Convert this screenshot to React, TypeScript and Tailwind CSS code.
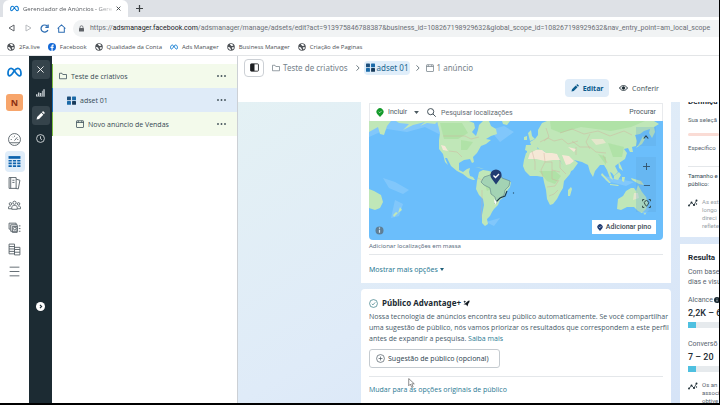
import type { ReactNode } from "react";

type P = { className?: string };

const Meta = ({ className }: P) => (
  <svg viewBox="0 0 24 16" className={className} fill="none" stroke="#0a78d1" strokeWidth="2.8" strokeLinecap="round">
    <path d="M12 6.500C9.800 3.200 8.400 2 6.600 2 3.800 2 1.600 6 1.600 10c0 2.500 1 4 2.700 4 2.200 0 3.600-2 7.700-8.500C13.800 2.900 15.500 2 17.200 2c2.900 0 5.200 4 5.200 8.200 0 2.400-1 3.800-2.800 3.800-2 0-3.400-1.500-7.600-7.500" />
  </svg>
);

const Globe = () => (
  <svg viewBox="0 0 16 16" className="size-2 shrink-0">
    <circle cx="8" cy="8" r="7.500" fill="#4d5156" />
    <path d="M2 8c2 0 4 .5 4.500 2S8 12 8 13.800C5 13.800 2.200 11.500 2 8zM6 2.500C8 1.800 11 2 13 5c-1.500 0-2 1.500-3.500 1.200C8 6 9 4.500 6.500 4.500zM9.500 9c1.500-1 3.500-.5 4.500 0-.5 2-1.500 3-3 4 0-1.500-1.500-2.500-1.500-4z" fill="#fff" />
  </svg>
);

const Folder = ({ className }: P) => (
  <svg viewBox="0 0 16 16" className={className} fill="none" stroke="currentColor" strokeWidth="1.500" strokeLinejoin="round">
    <path d="M1 13.500V2.500h5l1.500 2.500H15v8.500z" />
  </svg>
);

const Grid = ({ className }: P) => (
  <svg viewBox="0 0 16 16" className={className}>
    <rect x="0" y="1" width="7" height="6.500" rx="1" fill="#1d4f7c" />
    <rect x="9" y="1" width="7" height="6.500" rx="1" fill="#1a6aa8" />
    <rect x="0" y="9" width="7" height="6.500" rx="1" fill="#1a6aa8" />
    <rect x="9" y="9" width="7" height="6.500" rx="1" fill="#173a5a" />
  </svg>
);

const AdBox = ({ className }: P) => (
  <svg viewBox="0 0 16 16" className={className} fill="none" stroke="currentColor" strokeWidth="1.500">
    <rect x="1" y="1.500" width="14" height="13.500" rx="1" />
    <path d="M1 5h14M4.500 1.500V5M11.500 1.500V5" />
  </svg>
);

const Pencil = ({ className }: P) => (
  <svg viewBox="0 0 16 16" className={className} fill="currentColor">
    <path d="M1 15l1-4.500L9.500 3 13 6.500 5.500 14zM10.500 2l1.200-1.200c.5-.5 1.200-.5 1.700 0l1.800 1.800c.5.5.5 1.200 0 1.700L14 5.500z" />
  </svg>
);

const Estimate = () => (
  <svg viewBox="0 0 20 16" className="mt-px h-2 w-[10px] shrink-0" fill="none" stroke="#1c2b33" strokeWidth="1.500">
    <path d="M2 13l5-6 5 5 5-9" />
    <g fill="#1c2b33" stroke="none">
      <circle cx="2" cy="13" r="1.800" /><circle cx="7" cy="7" r="2" /><circle cx="12" cy="12" r="2.200" /><circle cx="17" cy="3" r="2" /><circle cx="17" cy="10" r="1.300" />
    </g>
  </svg>
);

const Bookmark = ({ icon, children }: { icon?: ReactNode; children: string }) => (
  <a href="#" className="flex items-center gap-1 whitespace-nowrap">
    {icon ?? <Globe />}
    {children}
  </a>
);

const Browser = () => (
  <header className="shrink-0 font-['Open_Sans','Noto_Sans',sans-serif] text-[#5f6368]">
    <div className="flex h-[17px] items-end bg-[#dee1e6] pl-[3px]">
      <div className="flex h-[17px] w-[125px] items-center rounded-t-md bg-white px-[7px]">
        <Meta className="mr-1 h-[7px] w-[9px] shrink-0" />
        <span className="bg-gradient-to-r from-[#4b4f54] from-80% to-[#4b4f54]/20 bg-clip-text text-[6px] whitespace-nowrap text-transparent">
          Gerenciador de Anúncios - Gere
        </span>
        <button aria-label="Fechar guia" className="ml-auto">
          <svg viewBox="0 0 8 8" className="size-[5px]" stroke="#3c4043" strokeWidth="1.400"><path d="M1 1l6 6M7 1L1 7" /></svg>
        </button>
      </div>
      <button aria-label="Nova guia" className="ml-2 flex h-[17px] items-center">
        <svg viewBox="0 0 8 8" className="size-[7px]" stroke="#3c4043" strokeWidth="1.400"><path d="M4 0v8M0 4h8" /></svg>
      </button>
    </div>
    <div className="flex h-[22px] items-center bg-white">
      <div className="flex w-[73px] shrink-0 items-center gap-2 pl-2">
        <button aria-label="Voltar"><svg viewBox="0 0 16 16" className="size-2" fill="none" stroke="#5f6368" strokeWidth="2"><path d="M12 2v12L2 8z" /></svg></button>
        <button aria-label="Avançar"><svg viewBox="0 0 16 16" className="size-2" fill="none" stroke="#b8bbbf" strokeWidth="2"><path d="M4 2v12l10-6z" /></svg></button>
        <button aria-label="Recarregar"><svg viewBox="0 0 16 16" className="size-[9px]" fill="none" stroke="#2d6db3" strokeWidth="2.200"><path d="M14 10.500A6.300 6.300 0 1 1 13 4M14.500 1v5h-5" /></svg></button>
        <button aria-label="Início"><svg viewBox="0 0 16 16" className="size-[9px]" fill="none" stroke="#2d6db3" strokeWidth="1.800"><path d="M1 8l7-6.500L15 8M3 7v7.500h10V7" /></svg></button>
      </div>
      <div className="flex h-[17px] min-w-0 flex-1 items-center gap-[6px] overflow-hidden rounded-l-full bg-[#f1f3f4] pl-[6px]">
        <svg viewBox="0 0 10 12" className="h-[7px] w-[5px] shrink-0" fill="#5f6368"><rect y="5" width="10" height="7" rx="1" /><path d="M2 5V3.500a3 3 0 0 1 6 0V5" fill="none" stroke="#5f6368" strokeWidth="1.600" /></svg>
        <span className="font-['Roboto',sans-serif] text-[7px] whitespace-nowrap text-[#6b6f74]">
          https://<span className="text-[#202124]">adsmanager.facebook.com</span>/adsmanager/manage/adsets/edit?act=913975846788387&amp;business_id=108267198929632&amp;global_scope_id=108267198929632&amp;nav_entry_point=am_local_scope
        </span>
      </div>
    </div>
    <nav className="flex h-4 items-center gap-2 bg-white pl-[7px] text-[6px] text-[#4b4f54]">
      <Bookmark>2Fa.live</Bookmark>
      <Bookmark icon={<svg viewBox="0 0 16 16" className="size-2"><circle cx="8" cy="8" r="8" fill="#1469d6" /><path d="M7 16V10H5V7.500h2V6c0-2 1-3 3-3h1.500v2.300H10.300c-.8 0-1 .3-1 1v1.200h2.200L11 10H9.300v6z" fill="#fff" /></svg>}>Facebook</Bookmark>
      <Bookmark>Qualidade da Conta</Bookmark>
      <Bookmark icon={<Meta className="h-[6px] w-2" />}>Ads Manager</Bookmark>
      <Bookmark>Business Manager</Bookmark>
      <Bookmark>Criação de Paginas</Bookmark>
    </nav>
    <div className="h-px bg-[#e3e5e7]" />
  </header>
);

const RailButton = ({ label, active, children }: { label: string; active?: boolean; children: ReactNode }) => (
  <button aria-label={label} className={`flex h-[21px] w-5 items-center justify-center rounded-sm ${active ? "bg-[#e0edf9]" : ""}`}>
    <svg viewBox="0 0 24 24" className="size-[13px]" fill="none" stroke="#59636a" strokeWidth="1.700">{children}</svg>
  </button>
);

const Rail = () => (
  <nav className="flex w-[29px] shrink-0 flex-col items-center bg-white pt-[11px]">
    <Meta className="h-[10px] w-[15px]" />
    <div className="mt-[17px] mb-[18px] flex size-[17px] items-center justify-center rounded-[3px] bg-[#f7a56b] text-[9px] font-bold text-[#8c2f12]">N</div>
    <div className="flex flex-col items-center gap-px">
      <RailButton label="Visão geral">
        <circle cx="12" cy="12" r="11" /><path d="M3 18h18M12 14l5-6M5 12h2M8 7l1 1M12 5v2M19 12h-2" />
      </RailButton>
      <RailButton label="Campanhas" active>
        <g stroke="none" fill="#0d63ad"><path d="M1 2h22v5H1z" /><path d="M1 9h6v3H1zM9 9h6v3H9zM17 9h6v3h-6zM1 14h6v3H1zM9 14h6v3H9zM17 14h6v3h-6zM1 19h6v3H1zM9 19h6v3H9zM17 19h6v3h-6z" /></g>
      </RailButton>
      <RailButton label="Relatórios">
        <path d="M2 1h13v20H2zM5 1v20M8 6h4M8 10h4M15 4l7 2-3 16-5-1" />
      </RailButton>
      <RailButton label="Públicos">
        <circle cx="12" cy="7" r="3" /><circle cx="4.500" cy="9" r="2.300" /><circle cx="19.500" cy="9" r="2.300" /><path d="M7 19v-4c0-2 2-3 5-3s5 1 5 3v4zM7 18H1v-3c0-1 1-2 4-2M17 18h6v-3c0-1-1-2-4-2" />
      </RailButton>
      <RailButton label="Configurações de anúncios">
        <path d="M4 15H2V4h13v3M5 7h12v12H5zM8 10h9v11H8z" /><circle cx="12.500" cy="14" r="2.500" /><path d="M20 9h3M20 14h3M20 19h3" />
      </RailButton>
      <RailButton label="Cobrança">
        <path d="M2 2h10v18H2zM12 8h10v14H12zM2 6.500h10M2 11h10M2 15.500h10M12 12h10M12 17h10" />
      </RailButton>
      <RailButton label="Todas as ferramentas">
        <path d="M3 4h18M3 12h18M3 20h18" />
      </RailButton>
    </div>
  </nav>
);

const DarkRail = () => (
  <nav className="flex w-[23px] shrink-0 flex-col items-center bg-[#1c2b33] pt-1">
    <button aria-label="Fechar" className="flex h-[19px] w-[18px] items-center justify-center rounded-[3px] bg-[#35434b]">
      <svg viewBox="0 0 8 8" className="size-[7px]" stroke="#fff"><path d="M.5.5l7 7M7.500.5l-7 7" /></svg>
    </button>
    <button aria-label="Gráficos" className="flex h-[27px] items-center justify-center">
      <svg viewBox="0 0 16 16" className="size-[9px]" fill="#c9d0d4"><path d="M0 11h2.500v3H0zM3.500 8H6v6H3.500zM7 9h2.500v5H7zM10.500 5H12v9h-1.500zM13 2h2.500v12H13zM0 15h16v1H0z" /></svg>
    </button>
    <button aria-label="Editar" className="flex h-[19px] w-[18px] items-center justify-center rounded-[3px] bg-[#35434b]">
      <Pencil className="size-[9px] text-white" />
    </button>
    <button aria-label="Histórico" className="flex h-[27px] items-center justify-center">
      <svg viewBox="0 0 16 16" className="size-[9px]" fill="none" stroke="#d5dadd" strokeWidth="1.600"><circle cx="8" cy="8" r="7" /><path d="M8 4v4.500l2.500 1.500" /></svg>
    </button>
    <button aria-label="Expandir" className="mt-auto mb-[92px]">
      <svg viewBox="0 0 16 16" className="size-[9px]"><circle cx="8" cy="8" r="8" fill="#fff" /><path d="M7 5l3 3-3 3" fill="none" stroke="#1c2b33" strokeWidth="2" /></svg>
    </button>
  </nav>
);

const TreeRow = ({ icon, label, className }: { icon: ReactNode; label: string; className: string }) => (
  <li className={`flex h-6 items-center border-l pr-[11px] text-[7px] text-[#344854] ${className}`}>
    {icon}
    <span className="ml-1 flex-1">{label}</span>
    <button aria-label={`Mais opções de ${label}`}>
      <svg viewBox="0 0 18 4" className="h-[2px] w-[9px]" fill="#46545c"><circle cx="2" cy="2" r="1.900" /><circle cx="9" cy="2" r="1.900" /><circle cx="16" cy="2" r="1.900" /></svg>
    </button>
  </li>
);

const Tree = () => (
  <aside className="w-[186px] shrink-0 border-r border-[#ccd0d5] bg-white pt-2 font-['Open_Sans','Noto_Sans',sans-serif]">
    <ul>
      <TreeRow icon={<Folder className="size-2" />} label="Teste de criativos" className="border-[#7cc043] bg-[#f3faeb] pl-[6px]" />
      <TreeRow icon={<Grid className="size-[9px]" />} label="adset 01" className="border-[#1c6fb5] bg-[#dfebf8] pl-[14px]" />
      <TreeRow icon={<AdBox className="size-2" />} label="Novo anúncio de Vendas" className="border-[#7cc043] bg-[#f3faeb] pl-[23px]" />
    </ul>
  </aside>
);

const Chevron = () => (
  <svg viewBox="0 0 5 8" className="mr-1 ml-[6px] h-[6px] w-1" fill="none" stroke="#6b7880" strokeWidth="1.300"><path d="M.5 .5l3.500 3.500-3.500 3.500" /></svg>
);

const TopBar = () => (
  <div className="h-[46px] shrink-0 bg-white">
    <div className="flex h-[23px] items-center pl-[6px] text-[8px] text-[#75828a]">
      <button aria-label="Alternar painel" className="mr-[6px] flex h-[18px] w-5 items-center justify-center rounded-sm border border-[#ccd0d5]">
        <svg viewBox="0 0 16 16" className="size-[9px]"><rect x="1" y="1.500" width="14" height="13" rx="1.500" fill="none" stroke="#1c1e21" strokeWidth="1.500" /><path d="M1 1.500h7v13H1z" fill="#1c1e21" /></svg>
      </button>
      <a href="#" className="flex items-center gap-[3px] px-[2px]"><Folder className="size-2" />Teste de criativos</a>
      <Chevron />
      <a href="#" className="flex h-[14px] items-center gap-[2px] rounded-sm bg-[#e0eefa] px-[2px] text-[#1b6690]"><Grid className="size-[9px]" />adset 01</a>
      <Chevron />
      <a href="#" className="flex items-center gap-[2px] px-[2px]"><AdBox className="size-2" />1 anúncio</a>
    </div>
    <div className="flex h-[18px] justify-end pr-[60px] text-[7px]">
      <button className="mr-[10px] flex h-[18px] w-11 items-center justify-center gap-1 rounded-sm bg-[#dfecf8] font-bold text-[#0a5a8c]">
        <Pencil className="size-2" />Editar
      </button>
      <button className="flex h-[18px] items-center gap-1 text-[#4b5960]">
        <svg viewBox="0 0 18 12" className="h-[6px] w-[9px]" fill="none" stroke="#1c2b33" strokeWidth="1.800"><path d="M1 6c4-6.500 12-6.500 16 0-4 6.500-12 6.500-16 0z" /><circle cx="9" cy="6" r="2.600" fill="#1c2b33" /></svg>
        Conferir
      </button>
    </div>
  </div>
);

const WorldMap = () => (
  <svg viewBox="369 121 294 119" preserveAspectRatio="xMidYMid slice" className="h-[119px] w-full">
    <rect x="369" y="121" width="294" height="119" fill="#6bbefb" />
    <g fill="#94d0fb" opacity=".55">
      <path d="M369 121h68l4 14-16-8-18 5-20-3-18 8z" />
      <path d="M383 178l12 4 14 8-6 4-14-6zM395 200l8 4-4 12-8 2zM486 222l14-4-6 8zM604 176l30 6-8 4-20-5zM640 205l10 4-6 6zM490 130l14-4 10 6-14 10z" />
    </g>
    <g fill="#c0e7b8">
      <path d="M369 121h22l-4 5-3 9-4-1-2-7-9 5zM396 121h42l-3 3-8-1-7 3 5-4-12 3-10 5 6-6-10-1z" />
      <path d="M437 121h32l5 2 1 5-3 4 4 4 2-6 1-5 4-4h6l2 5 5 3 1 5-6 2-5 3 5 1-5 4-5 2-4 7-4 4 1 5-2 1-2-4-6 1-5 3 0 7 4 2 4-3 3-1-1 4 1 4 3 1 2 3-2 0-5-2-5-4-6-3-6-5-4-8-2 0 3 7-3-3-2-8-4-5 0-9 1-7z" />
      <path d="M479 172l4-2 6 1 6 2 4 4 6 3 6 2-1 5-4 5-2 5-4 3-2 5-4 4-2 3-2 4-3 3 1 5-3 2-3-3 0-8 2-10-1-6-4-4-3-6 1-8z" />
      <path d="M369 189l5 2 7 4 2 7-3 6-5 2-6-2zM400 207l2 3-4 3zM396 212l2 1-4 4-1-2z" />
      <path d="M502 121h8l-3 4-4-1zM528 133l3-3 1 6 3 3-5 2zM524 137l3-1 0 4-3 0z" />
      <path d="M527 151l-2-1 1-5 5 0-1-3 5-3 3-4 0-5 4-7 5-2h107l5 3-5 3 1 5-3 6-3-5 1-4-6 2-4 3-5 1 2 6-1 5-4 1 1 5-3 0-2-4-4 1 3 4-2 6-6 4-4 3 3 6-4 4-2-3-2-1 3 8-3-2-3-8-3-5-4 0-5 6-2 6-3-5-2-7-6-3-8-2 4 3-5 7-6 3-4-7-4-7-1-3-8-2-1-2-3 2-2-3-4-1-3-3 3 8-4-2-4-2-5 3z" />
      <path d="M526 153l8-4 7 0 4 3 6 0 6 1 3 8 5 7 7 0-2 6-6 7-1 7-3 5-3 6-4 5-3 1-3-6-1-9-2-8-1-5-6-1-7 0-5-5-2-5 1-6zM571 187l1 2-2 7-2 0 0-6z" />
      <path d="M618 199l5-3 3-5 5-3 3 0 2 3 2-6 4 7 4 5 2 7-2 5-4 4-4-2-4-4-7 0-6 3-4-1zM644 213l2 0-1 2z" />
      <path d="M602 173l9 10-2 0-8-8zM614 176l5-4 2 3-3 5-4-1zM610 184l9 1-1 1-8-1zM622 177l3 0-1 5-2-1zM631 178l10 3 3 4-5-1-7-4zM618 160l3 6 2 5-4-3zM643 136l2 3-3 5-6 4 3-4z" />
      <path d="M475 167l6 1 3 1-5-1z" />
    </g>
    <g fill="#fbe8d9">
      <path d="M530 153l6-3 6 0 4 3 6 0 5 1 3 6-7 0-8 1-9-2-8 0zM562 155l7 1 5 5-4 3-4 1zM568 147l8 2-2 3zM441 145l4 1 3 5-5-1z" opacity=".9" />
      <path d="M591 139l12 0 3 4-10 2zM634 193l4 0 1 5-6 2z" opacity=".6" />
    </g>
    <g fill="#a9dfa0" opacity=".7">
      <path d="M440 123l22 0 6 10-10 6-14 0zM550 121h95l-14 6-20 4-30-4-20 6-10-4zM539 171l16 0 6 5-6 8-8-3zM461 140l12 2-6 8-6 0zM483 178l12 1 0 8-8 4zM608 143l16 4-2 10-9 0zM598 154l8 3 0 8z" />
    </g>
    <g fill="none" stroke="#d3a99a" strokeWidth=".4">
      <path d="M443 136h22l6 3 8-2M449 151l8 1 5 5M540 142l8-4 6 3 8-2 6 5 10-3M546 128l3 9-5 4M560 133l12-4 12 5 14-3 12 5 14-5 8 4M572 141l8 6 10 0 6 5 10 1M576 147l0 8M590 134l-4 8 4 7M544 153l1 9 7 0 0 8 8 2M532 151l3 11 0 8M545 162l-4 8 2 7M552 170l0 9 6 2M547 187l8-1 4-6M549 196l5-2 4-4M560 160l0 8 6 6M482 190l0 14-1 14M478 178l4 2 5-3M603 155l4 8M641 181l0 4" />
    </g>
    <path d="M484 177l6-2 2-2 5 3 3-2 2 4 8 3-1 5-4 4-1 5-5 4-3 2-1-4-4-3-1-6-6-3-3-3z" fill="#a3d3b4" stroke="#5d8288" strokeWidth=".6" />
    <path d="M507 191l-2 5-5 2-3 3-2 3" fill="none" stroke="#1d3a4c" strokeWidth="1.100" />
    <path d="M494 199l3 3-2 3z" fill="#fff" />
    <circle cx="513.500" cy="193" r=".7" fill="#2c5574" />
    <path d="M496 184.500l-4-5.500a5.600 5.600 0 1 1 8 0z" fill="#213c72" />
    <path d="M493.500 175.500l2 2 3.500-3.500" fill="none" stroke="#fff" strokeWidth="1.400" />
    <circle cx="379.500" cy="230.500" r="4" fill="#5f7f96" />
    <path d="M379.500 229.800v3M379.500 227.500v1.300" stroke="#cfe4f2" strokeWidth="1.200" />
  </svg>
);

const mapBtn = "flex w-5 items-center justify-center bg-[#5aa3d6]/25";

const LocationCard = () => (
  <section className="h-[181px] bg-white px-2 pt-px">
    <div className="flex h-[18px] items-center border-x border-t border-[#e8eaed] pr-[6px] pl-[6px] font-['Roboto',sans-serif] text-[7px] text-[#4b5960]">
      <svg viewBox="0 0 14 16" className="h-[9px] w-2" ><path d="M7 16L2 10.500A6.300 6.300 0 1 1 12 10.500z" fill="#149a2b" /><path d="M4.500 6.500l2 2 3.500-3.500" stroke="#fff" fill="none" /></svg>
      <button className="ml-1 flex items-center gap-[7px]">
        Incluir
        <svg viewBox="0 0 8 5" className="h-[3px] w-[5px]" fill="#4b5960"><path d="M0 0h8L4 5z" /></svg>
      </button>
      <svg viewBox="0 0 16 16" className="mr-[5px] ml-2 size-[9px] shrink-0" fill="none" stroke="#33424b" strokeWidth="1.600"><circle cx="6.500" cy="6.500" r="5.500" /><path d="M10.500 10.500l5 5" /></svg>
      <input aria-label="Pesquisar localizações" placeholder="Pesquisar localizações" className="min-w-0 flex-1 bg-transparent placeholder:text-[#5f6b72]" />
      <button>Procurar</button>
    </div>
    <div className="relative h-[119px] overflow-hidden rounded-b-sm">
      <WorldMap />
      <div className="absolute top-[6px] right-[7px] flex flex-col">
        <button aria-label="Recolher" className={`${mapBtn} mb-[11px] h-[19px]`}><svg viewBox="0 0 8 5" className="h-1 w-[6px]" fill="none" stroke="#2b4354" strokeWidth="1.500"><path d="M1 4.500l3-3.500 3 3.500" /></svg></button>
        <button aria-label="Aumentar zoom" className={`${mapBtn} h-[19px]`}><svg viewBox="0 0 8 8" className="size-[7px]" stroke="#33566f" strokeWidth="1.100"><path d="M4 0v8M0 4h8" /></svg></button>
        <button aria-label="Diminuir zoom" className={`${mapBtn} h-[18px]`}><svg viewBox="0 0 8 8" className="size-[7px]" stroke="#33566f"><path d="M1 4h7" /></svg></button>
        <button aria-label="Centralizar" className={`${mapBtn} h-[18px]`}><svg viewBox="0 0 16 16" className="size-[9px]" fill="none" stroke="#2a3f3c" strokeWidth="1.600"><path d="M1 4V1h3M12 1h3v3M15 12v3h-3M4 15H1v-3M8 13l-3-4a3.800 3.800 0 1 1 6 0z" /></svg></button>
      </div>
      <button className="absolute right-[7px] bottom-[6px] flex h-[14px] w-16 items-center justify-center gap-[3px] bg-white font-['Roboto',sans-serif] text-[7px] font-medium text-[#3b4a52]">
        <svg viewBox="0 0 14 16" className="h-[7px] w-[6px]"><path d="M7 16L2 10.500A6.300 6.300 0 1 1 12 10.500z" fill="#213c72" /><path d="M4.500 6.500l2 2 3.500-3.500" stroke="#fff" fill="none" strokeWidth="1.500" /></svg>
        Adicionar pino
      </button>
    </div>
    <a href="#" className="block h-[15px] border-b border-[#e4e7ea] text-[6px] leading-[13px] text-[#5a6d80]">Adicionar localizações em massa</a>
    <button className="flex h-7 items-center gap-[2px] text-[7px] text-[#2b7a94]">
      Mostrar mais opções
      <svg viewBox="0 0 8 6" className="h-[3px] w-1" fill="#20607a"><path d="M0 0h8L4 6z" /></svg>
    </button>
  </section>
);

const AudienceCard = () => (
  <section className="min-h-0 flex-1 rounded-t-sm bg-white px-2 pt-2">
    <h2 className="flex h-3 items-center text-[8px] font-bold text-[#1c2b33]">
      <svg viewBox="0 0 16 16" className="mr-1 size-[9px]" fill="none" stroke="#3a7d86" strokeWidth="1.300"><circle cx="8" cy="8" r="7" /><path d="M5 8.500l2 2 4-4.500" /></svg>
      Público Advantage+
      <svg viewBox="0 0 16 16" className="ml-[2px] size-[7px]" fill="#101820"><path d="M15 1c0 3-.5 5-2.500 6.500L10 15 7.500 11 1 9.500 6.500 7C8.500 4 11 1.500 15 1zM4 1l1 2 2 1-2 1-1 2-1-2-2-1 2-1z" /></svg>
    </h2>
    <p className="mt-[2px] font-['Open_Sans','Noto_Sans',sans-serif] text-[7px] leading-[11px] whitespace-nowrap text-[#465a69]">
      Nossa tecnologia de anúncios encontra seu público automaticamente. Se você compartilhar<br />
      uma sugestão de público, nós vamos priorizar os resultados que correspondem a este perfil<br />
      antes de expandir a pesquisa. <a href="#" className="text-[#2b7a94]">Saiba mais</a>
    </p>
    <button className="mt-[5px] flex h-[19px] items-center gap-[3px] rounded-[3px] border border-[#c5cbd0] pr-[10px] pl-[6px] text-[7px] text-[#344854]">
      <svg viewBox="0 0 16 16" className="size-[9px]" fill="none" stroke="#46545c" strokeWidth="1.200"><circle cx="8" cy="8" r="7" /><path d="M8 4.500v7M4.500 8h7" /></svg>
      Sugestão de público (opcional)
    </button>
    <hr className="mt-2 border-[#e4e7ea]" />
    <a href="#" className="mt-[7px] block font-['Open_Sans','Noto_Sans',sans-serif] text-[7px] leading-3 text-[#2b7a94]">Mudar para as opções originais de público</a>
  </section>
);

const Bar = () => <div className="mt-px h-[6px] bg-[#e6eaed]"><div className="h-full w-2 bg-[#4fc0e0]" /></div>;

const Summary = () => (
  <aside className="flex w-[39px] shrink-0 flex-col gap-[7px] overflow-hidden font-['Roboto',sans-serif] whitespace-nowrap text-[#56646d]">
    <section className="h-[135px] shrink-0 overflow-hidden bg-white pl-2 text-[6px]">
      <h3 className="-mt-[6px] text-[8px] leading-[11px] font-bold text-[#1c2b33]">Definiçã</h3>
      <p className="mt-2 leading-[10px]">Sua seleçã</p>
      <div className="mt-2 h-[3px] rounded-full bg-[#fadcd5]" />
      <p className="mt-[6px] leading-3">Específico</p>
      <div className="mt-3 border-t border-[#e4e7ea] pt-[5px] leading-2 text-[#344854]">Tamanho e<br />público:</div>
      <div className="mt-[10px] flex gap-1 leading-2 text-[#98a1a7]"><Estimate /><span>As est<br />longo<br />direci<br />reflete</span></div>
    </section>
    <section className="min-h-0 flex-1 overflow-hidden bg-white pt-2 pl-2 text-[7px]">
      <h3 className="text-[8px] leading-3 font-bold text-[#1c2b33]">Resulta</h3>
      <p className="mt-[3px] leading-[10px]">Com base<br />dias e visu</p>
      <p className="mt-2 flex items-center gap-px leading-[10px]">Alcance <svg viewBox="0 0 16 16" className="size-[6px] shrink-0"><circle cx="8" cy="8" r="8" fill="#1c2b33" /><path d="M8 7v5M8 4v1.500" stroke="#fff" strokeWidth="2" /></svg></p>
      <p className="text-[9px] leading-4 font-medium text-[#1c2b33]">2,2K – 6</p>
      <Bar />
      <p className="mt-[11px] leading-[10px]">Conversõ</p>
      <p className="text-[9px] leading-4 font-medium text-[#1c2b33]">7 – 20</p>
      <Bar />
      <div className="mt-[9px] flex gap-1 text-[6px] leading-2"><Estimate /><span>Os an<br />associ<br />obtive</span></div>
    </section>
  </aside>
);

export default function App() {
  return (
    <div className="h-screen overflow-hidden bg-black pr-px pb-[2px] font-['Noto_Sans','Open_Sans',sans-serif] leading-none">
      <div className="flex h-full flex-col overflow-hidden bg-white">
        <Browser />
        <div className="flex min-h-0 flex-1">
          <Rail />
          <DarkRail />
          <Tree />
          <main className="flex min-w-0 flex-1 flex-col">
            <TopBar />
            <div className="flex min-h-0 flex-1 gap-[9px] overflow-hidden bg-gradient-to-br from-[#e4f1f4] via-[#dfebf8] to-[#d5e3f7] pl-[123px]">
              <div className="flex min-w-0 flex-1 flex-col gap-[6px]">
                <LocationCard />
                <AudienceCard />
              </div>
              <Summary />
            </div>
          </main>
        </div>
      </div>
      <svg viewBox="0 0 12 18" className="pointer-events-none absolute top-[378px] left-[408px] h-[10px] w-[7px]"><path d="M1 1v13l3-3 2.500 6 2.500-1-2.500-5.500H11z" fill="#fff" stroke="#555" strokeWidth="1.200" /></svg>
    </div>
  );
}
